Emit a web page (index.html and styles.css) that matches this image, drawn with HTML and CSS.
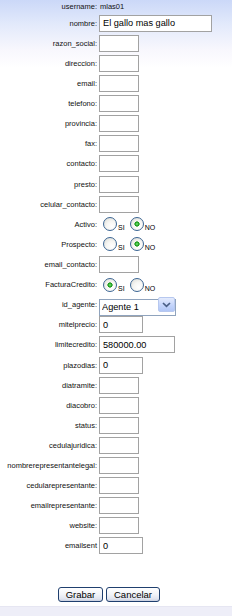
FILE: index.html
```html
<!DOCTYPE html>
<html lang="es">
<head>
  <meta charset="UTF-8">
  <title>Editar cliente</title>
  <meta name="viewport" content="width=device-width, initial-scale=1">
  <link rel="stylesheet" href="styles.css">
</head>
<body>
<form class="ficha">
  <div class="fila fila-user"><label>username:</label><span class="valor">mlas01</span></div>
  <div class="fila"><label>nombre:</label><input class="w-nombre" type="text" value="El gallo mas gallo"></div>
  <div class="fila"><label>razon_social:</label><input class="w-sm" type="text"></div>
  <div class="fila"><label>direccion:</label><input class="w-sm" type="text"></div>
  <div class="fila"><label>email:</label><input class="w-sm" type="text"></div>
  <div class="fila"><label>telefono:</label><input class="w-sm" type="text"></div>
  <div class="fila"><label>provincia:</label><input class="w-sm" type="text"></div>
  <div class="fila"><label>fax:</label><input class="w-sm" type="text"></div>
  <div class="fila"><label>contacto:</label><input class="w-sm" type="text"></div>
  <div class="fila"><label>presto:</label><input class="w-sm" type="text"></div>
  <div class="fila"><label>celular_contacto:</label><input class="w-sm" type="text"></div>
  <div class="fila"><label>Activo:</label>
    <span class="radios"><input type="radio" name="activo"><span class="op">SI</span><input type="radio" name="activo" checked><span class="op">NO</span></span>
  </div>
  <div class="fila"><label>Prospecto:</label>
    <span class="radios"><input type="radio" name="prospecto"><span class="op">SI</span><input type="radio" name="prospecto" checked><span class="op">NO</span></span>
  </div>
  <div class="fila"><label>email_contacto:</label><input class="w-sm" type="text"></div>
  <div class="fila"><label>FacturaCredito:</label>
    <span class="radios"><input type="radio" name="factura" checked><span class="op">SI</span><input type="radio" name="factura"><span class="op">NO</span></span>
  </div>
  <div class="fila"><label>id_agente:</label>
    <span class="combo">
      <select><option>Agente 1</option></select>
      <span class="flecha"><svg width="9" height="6" viewBox="0 0 9 6"><path d="M1 1l3.5 3.3L8 1" fill="none" stroke="#4a5f86" stroke-width="1.7"/></svg></span>
    </span>
  </div>
  <div class="fila"><label>mitelprecio:</label><input class="w-md" type="text" value="0"></div>
  <div class="fila"><label>limitecredito:</label><input class="w-lg" type="text" value="580000.00"></div>
  <div class="fila"><label>plazodias:</label><input class="w-md" type="text" value="0"></div>
  <div class="fila"><label>diatramite:</label><input class="w-sm" type="text"></div>
  <div class="fila"><label>diacobro:</label><input class="w-sm" type="text"></div>
  <div class="fila"><label>status:</label><input class="w-sm" type="text"></div>
  <div class="fila"><label>cedulajuridica:</label><input class="w-sm" type="text"></div>
  <div class="fila"><label>nombrerepresentantelegal:</label><input class="w-sm" type="text"></div>
  <div class="fila"><label>cedularepresentante:</label><input class="w-sm" type="text"></div>
  <div class="fila"><label>emailrepresentante:</label><input class="w-sm" type="text"></div>
  <div class="fila"><label>website:</label><input class="w-sm" type="text"></div>
  <div class="fila"><label>emailsent</label><input class="w-md" type="text" value="0"></div>

  <div class="botones">
    <button type="submit" class="btn btn-grabar">Grabar</button>
    <button type="button" class="btn btn-cancelar">Cancelar</button>
  </div>
</form>
<div class="pie"></div>
</body>
</html>
```

FILE: styles.css
```css
*{box-sizing:border-box;}
html{background:#fff;}
body{margin:0;min-height:616px;display:flex;flex-direction:column;font-family:"Liberation Sans",Arial,sans-serif;color:#000;background:linear-gradient(#cbd8f8 0,#e3eafb 25px,#f8f7fd 50px,#fff 68px) no-repeat;}

.ficha{padding-top:1px;}
.fila{display:grid;grid-template-columns:97px auto;column-gap:2px;height:20.12px;align-items:center;justify-items:start;}
.fila label{justify-self:end;font-size:7.5px;white-space:nowrap;color:#111;}
.fila-user{height:10px;margin-bottom:2.1px;}
.valor{font-size:7.5px;margin-left:1px;color:#111;}

input[type=text]{height:17px;margin:0;padding:0 0 0 3px;border:1px solid #a2a2a2;background:#fff;font:9.2px "Liberation Sans",Arial,sans-serif;color:#000;}
.w-sm{width:40px;}
.w-md{width:44px;}
.w-lg{width:76px;}
.w-nombre{width:113px;}

.radios{display:flex;align-items:flex-end;height:14px;padding-left:4px;}
.radios input{-webkit-appearance:none;appearance:none;width:14px;height:14px;margin:0;border:1px solid #3b6593;border-radius:50%;background:radial-gradient(circle at 65% 70%,#fff 0,#f6f6f3 45%,#d8d8d2 100%);}
.radios input:checked{background:radial-gradient(circle,#8ce88c 0,#2fb52f 1.3px,#1a8f1a 2.3px,transparent 2.9px),radial-gradient(circle at 65% 70%,#fff 0,#f6f6f3 45%,#d8d8d2 100%);}
.op{font-size:7px;line-height:1;margin:0 5px 0 1px;}

.combo{position:relative;width:77px;height:17px;}
.combo select{-webkit-appearance:none;appearance:none;width:100%;height:100%;margin:0;padding:0 0 0 2px;border:1px solid #8fa3bd;border-radius:0;background:#fff;font:9.2px "Liberation Sans",Arial,sans-serif;color:#000;}
.flecha{position:absolute;top:1px;right:1px;bottom:1px;width:17px;display:flex;align-items:center;justify-content:center;border:1px solid #b7c8ef;border-radius:2px;background:linear-gradient(#e4ebfd,#c2d3fb 60%,#b1c6f6);}

.botones{display:flex;gap:3px;margin-top:31px;padding-left:58px;}
.btn{height:15px;margin:0;padding:0;border:1px solid #1f3f6e;border-radius:3px;background:linear-gradient(#ffffff,#f1f3f8 50%,#dfe3ee 85%,#c7cedf);font:9.5px "Liberation Sans",Arial,sans-serif;color:#000;}
.btn-grabar{width:45px;}
.btn-cancelar{width:54px;}

.pie{margin-top:auto;height:10px;background:#eeeef8;border-top:1px solid #e6e6f2;}
```
